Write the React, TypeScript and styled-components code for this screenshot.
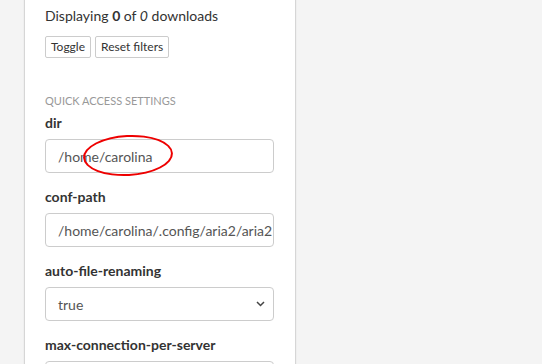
import React from 'react';
import styled, {createGlobalStyle} from "styled-components";

const GlobalStyle = createGlobalStyle`
    html, body {
        margin: 0;
        padding: 0;
        background: #f4f4f4;
        font-family: Lato, "Liberation Sans", sans-serif;
        overflow: hidden;
    }
`

type Setting = { name: string, value: string, kind: "input" | "select" }

const settings: Setting[] = [
    {name: "dir", value: "/home/carolina", kind: "input"},
    {name: "conf-path", value: "/home/carolina/.config/aria2/aria2.conf", kind: "input"},
    {name: "auto-file-renaming", value: "true", kind: "select"},
    {name: "max-connection-per-server", value: "1", kind: "input"},
]

export default function App() {
    return (
        <Page>
            <GlobalStyle/>
            <Sidebar>
                <Summary>Displaying <b>0</b> of <i>0</i> downloads</Summary>
                <ButtonRow>
                    <SmallButton>Toggle</SmallButton>
                    <SmallButton>Reset filters</SmallButton>
                </ButtonRow>
                <SectionTitle>Quick Access Settings</SectionTitle>
                {settings.map((s, i) => (
                    <Field key={s.name}>
                        <Label>{s.name}</Label>
                        <InputWrap>
                            {s.kind === "select" ? (
                                <Select>
                                    <span>{s.value}</span>
                                    <svg width="9" height="6" viewBox="0 0 9 6">
                                        <path d="M1 1l3.5 3.5 3.5-3.5" fill="none" stroke="#444" strokeWidth="1.5"/>
                                    </svg>
                                </Select>
                            ) : (
                                <TextInput readOnly value={s.value}/>
                            )}
                            {i === 0 && <Marker/>}
                        </InputWrap>
                    </Field>
                ))}
            </Sidebar>
        </Page>
    );
}

const Page = styled.div`
    display: flex;
    height: 364px;
    padding-left: 25px;
`

const Sidebar = styled.div`
    box-sizing: border-box;
    width: 270px;
    height: 100%;
    background: #fff;
    padding: 4px 21px 0 20px;
    box-shadow: -1px 0 1px rgba(0, 0, 0, 0.12), 1px 0 1px rgba(0, 0, 0, 0.12);
    overflow: hidden;
`

const Summary = styled.div`
    font-size: 14px;
    line-height: 24px;
    color: #333;
    b { font-weight: 700; }
    i { font-style: italic; }
`

const ButtonRow = styled.div`
    display: flex;
    gap: 4px;
    margin-top: 8px;
`

const SmallButton = styled.button`
    font-family: Lato, "Liberation Sans", sans-serif;
    font-size: 12px;
    line-height: 20px;
    padding: 0 5px;
    color: #333;
    background: #fff;
    border: 1px solid #ccc;
    border-radius: 2px;
`

const SectionTitle = styled.div`
    margin-top: 36px;
    font-size: 11px;
    line-height: 14px;
    text-transform: uppercase;
    color: #999;
`

const Field = styled.div`
    margin-top: 5px;
    & + & { margin-top: 14px; }
`

const Label = styled.div`
    font-size: 14px;
    font-weight: 700;
    line-height: 20px;
    color: #333;
    margin-bottom: 6px;
`

const InputWrap = styled.div`
    position: relative;
`

const TextInput = styled.input`
    box-sizing: border-box;
    width: 100%;
    height: 34px;
    padding: 0 1px 0 12px;
    font-family: Lato, "Liberation Sans", sans-serif;
    font-size: 14px;
    color: #555;
    border: 1px solid #ccc;
    border-radius: 4px;
    outline: none;
`

const Select = styled.div`
    box-sizing: border-box;
    height: 34px;
    display: flex;
    align-items: center;
    justify-content: space-between;
    padding: 0 8px 0 12px;
    font-size: 14px;
    color: #555;
    border: 1px solid #ccc;
    border-radius: 4px;
`

const Marker = styled.div`
    position: absolute;
    left: 38px;
    top: -4px;
    width: 90px;
    height: 41px;
    border: 2.5px solid #e00;
    border-radius: 50%;
    box-sizing: border-box;
    transform: rotate(-3deg);
`
